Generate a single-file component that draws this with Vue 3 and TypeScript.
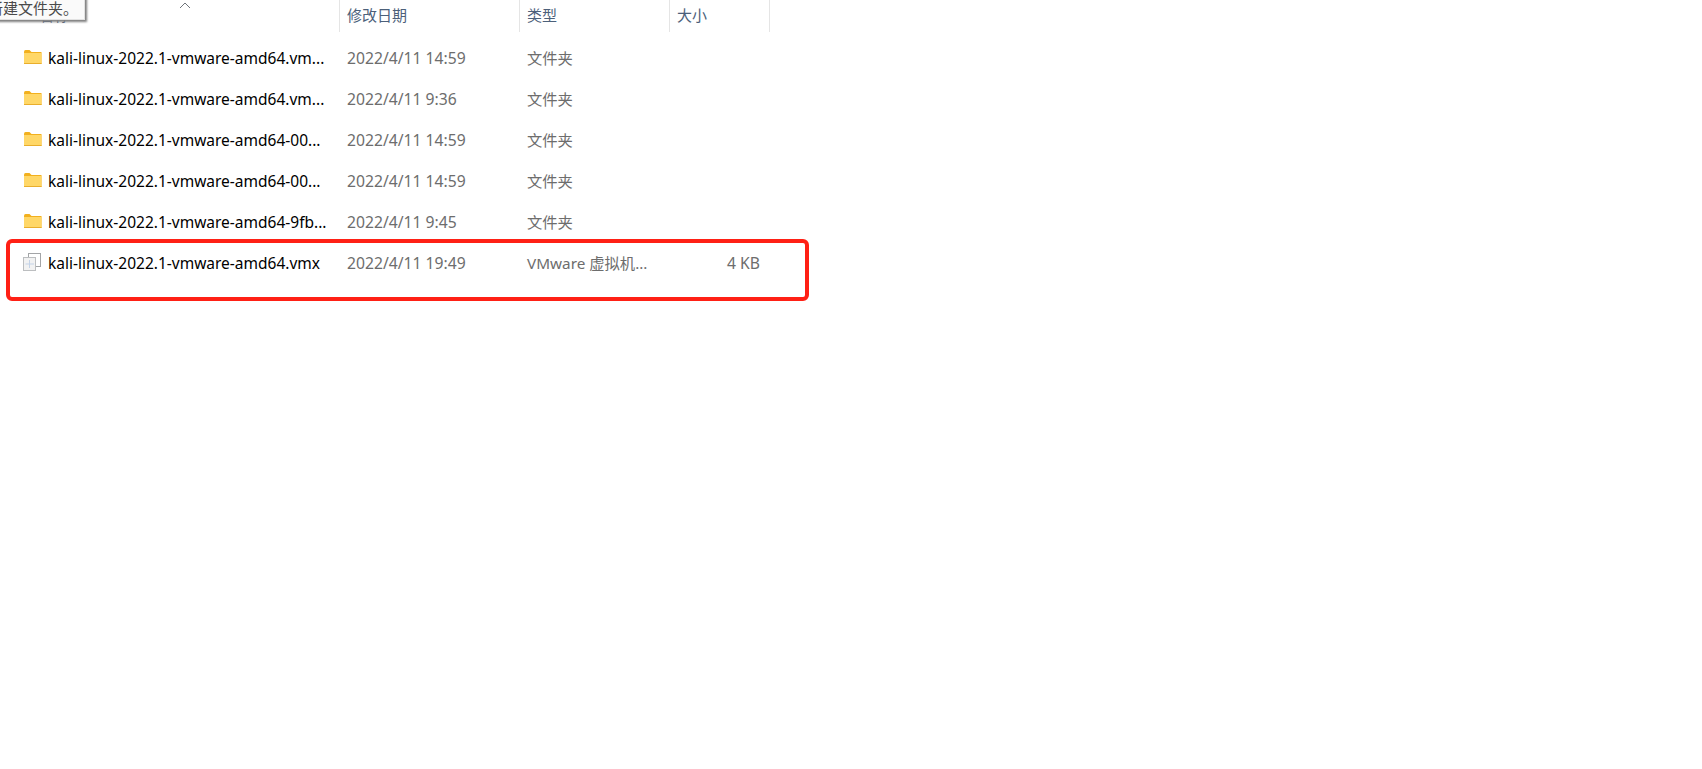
<template>
  <div class="explorer">
    <div class="tooltip">新建文件夹。</div>
    <div class="annotation"></div>

    <div class="header">
      <div class="head-cell name-head">
        <span class="sort-arrow">
          <svg width="12" height="7" viewBox="0 0 12 7"><path d="M1 6 L6 1 L11 6" fill="none" stroke="#6f747a" stroke-width="1" /></svg>
        </span>
        <span>名称</span>
      </div>
      <div class="head-cell">修改日期</div>
      <div class="head-cell">类型</div>
      <div class="head-cell">大小</div>
    </div>

    <div v-for="file in files" :key="file.name + file.date" class="row">
      <div class="name-cell">
        <svg v-if="file.folder" class="icon" width="20" height="16" viewBox="0 0 20 16">
          <path d="M2 3 Q2 1 3.5 1 H7.5 L9.5 3 H19.5 V15 H2 Z" fill="#f2b01e" />
          <rect x="2" y="4" width="17.5" height="11" fill="#ffd767" />
          <rect x="2" y="14" width="17.5" height="1" fill="#e9ae2c" />
        </svg>
        <svg v-else class="icon" width="20" height="20" viewBox="0 0 20 20">
          <rect x="6.5" y="1.5" width="12" height="13" fill="#fff" stroke="#a3a5a7" />
          <rect x="1.5" y="5.5" width="12" height="13" fill="#f2f2f2" stroke="#bcbec0" />
          <path d="M7.5 8 V16 M3.5 12 H12" stroke="#c4d3e8" fill="none" />
        </svg>
        <span class="file-name">{{ file.name }}</span>
      </div>
      <div class="cell">{{ file.date }}</div>
      <div class="cell type">{{ file.type }}</div>
      <div class="cell size">{{ file.size }}</div>
    </div>
  </div>
</template>

<script setup lang="ts">
interface FileRow {
  name: string
  date: string
  type: string
  size: string
  folder: boolean
}

const files: FileRow[] = [
  { name: 'kali-linux-2022.1-vmware-amd64.vm...', date: '2022/4/11 14:59', type: '文件夹', size: '', folder: true },
  { name: 'kali-linux-2022.1-vmware-amd64.vm...', date: '2022/4/11 9:36', type: '文件夹', size: '', folder: true },
  { name: 'kali-linux-2022.1-vmware-amd64-00...', date: '2022/4/11 14:59', type: '文件夹', size: '', folder: true },
  { name: 'kali-linux-2022.1-vmware-amd64-00...', date: '2022/4/11 14:59', type: '文件夹', size: '', folder: true },
  { name: 'kali-linux-2022.1-vmware-amd64-9fb...', date: '2022/4/11 9:45', type: '文件夹', size: '', folder: true },
  { name: 'kali-linux-2022.1-vmware-amd64.vmx', date: '2022/4/11 19:49', type: 'VMware 虚拟机...', size: '4 KB', folder: false },
]
</script>

<style>
html,
body {
  background: #fff;
}
</style>

<style scoped>
.explorer {
  position: relative;
  width: 1702px;
  height: 769px;
  overflow: hidden;
  background: #fff;
  font-family: "Noto Sans", "Noto Sans CJK SC", sans-serif;
  font-size: 15.5px;
}

.header,
.row {
  display: grid;
  grid-template-columns: 340px 180px 150px 100px;
  width: 770px;
}

.header {
  height: 32px;
  margin-bottom: 5px;
}

.head-cell {
  position: relative;
  padding-left: 7px;
  line-height: 30px;
  font-size: 15px;
  color: #4c607a;
  border-right: 1px solid #e5e5e5;
}

.name-head {
  padding-left: 39px;
}

.sort-arrow {
  position: absolute;
  left: 179px;
  top: 0;
  line-height: 7px;
}

.row {
  height: 41px;
  align-items: center;
}

.name-cell {
  display: flex;
  align-items: center;
  padding-left: 22px;
  color: #000;
}

.icon {
  flex: none;
  margin-right: 6px;
  margin-bottom: 2px;
}

.file-name {
  white-space: nowrap;
}

.cell {
  padding-left: 7px;
  font-size: 15.7px;
  line-height: 20px;
  color: #6d6d6d;
  white-space: nowrap;
}

.type {
  font-size: 15.3px;
}

.size {
  padding-left: 0;
  padding-right: 10px;
  text-align: right;
}

.tooltip {
  position: absolute;
  left: -16px;
  top: -4px;
  z-index: 2;
  width: 101px;
  height: 24px;
  padding-left: 3px;
  box-sizing: border-box;
  font-size: 15px;
  line-height: 23px;
  white-space: nowrap;
  color: #4a4a4a;
  background: #fafafa;
  border: 1px solid #e2e2e2;
  box-shadow: 2px 2px 2px #808080;
}

.annotation {
  position: absolute;
  left: 6px;
  top: 239px;
  z-index: 1;
  width: 803px;
  height: 62px;
  box-sizing: border-box;
  border: 4px solid #ff2015;
  border-radius: 6px;
}
</style>
